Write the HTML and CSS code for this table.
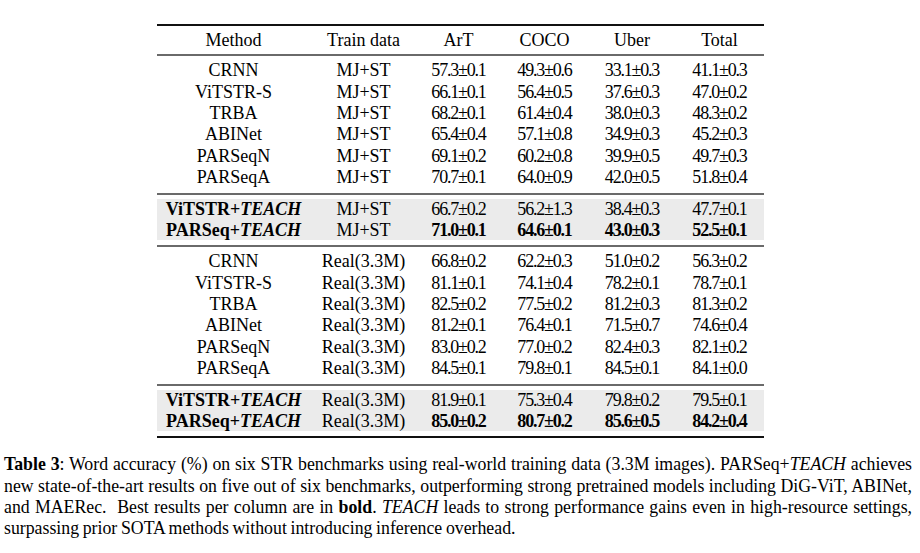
FILE: index.html
```html
<!DOCTYPE html>
<html lang="en">
<head>
<meta charset="utf-8">
<title>Table 3</title>
<link rel="stylesheet" href="styles.css">
</head>
<body>
<div class="page">
  <div class="table">
    <div class="section head">
      <div class="row">
        <div>Method</div><div>Train data</div><div>ArT</div><div>COCO</div><div>Uber</div><div>Total</div>
      </div>
    </div>

    <div class="section">
      <div class="row"><div>CRNN</div><div>MJ+ST</div><div class="num">57.3±0.1</div><div class="num">49.3±0.6</div><div class="num">33.1±0.3</div><div class="num">41.1±0.3</div></div>
      <div class="row"><div>ViTSTR-S</div><div>MJ+ST</div><div class="num">66.1±0.1</div><div class="num">56.4±0.5</div><div class="num">37.6±0.3</div><div class="num">47.0±0.2</div></div>
      <div class="row"><div>TRBA</div><div>MJ+ST</div><div class="num">68.2±0.1</div><div class="num">61.4±0.4</div><div class="num">38.0±0.3</div><div class="num">48.3±0.2</div></div>
      <div class="row"><div>ABINet</div><div>MJ+ST</div><div class="num">65.4±0.4</div><div class="num">57.1±0.8</div><div class="num">34.9±0.3</div><div class="num">45.2±0.3</div></div>
      <div class="row"><div>PARSeqN</div><div>MJ+ST</div><div class="num">69.1±0.2</div><div class="num">60.2±0.8</div><div class="num">39.9±0.5</div><div class="num">49.7±0.3</div></div>
      <div class="row"><div>PARSeqA</div><div>MJ+ST</div><div class="num">70.7±0.1</div><div class="num">64.0±0.9</div><div class="num">42.0±0.5</div><div class="num">51.8±0.4</div></div>
    </div>

    <div class="section">
      <div class="shade">
        <div class="row srow"><div><b>ViTSTR+<i>TEACH</i></b></div><div>MJ+ST</div><div class="num">66.7±0.2</div><div class="num">56.2±1.3</div><div class="num">38.4±0.3</div><div class="num">47.7±0.1</div></div>
        <div class="row srow"><div><b>PARSeq+<i>TEACH</i></b></div><div>MJ+ST</div><div class="num"><b>71.0±0.1</b></div><div class="num"><b>64.6±0.1</b></div><div class="num"><b>43.0±0.3</b></div><div class="num"><b>52.5±0.1</b></div></div>
      </div>
    </div>

    <div class="section">
      <div class="row"><div>CRNN</div><div>Real(3.3M)</div><div class="num">66.8±0.2</div><div class="num">62.2±0.3</div><div class="num">51.0±0.2</div><div class="num">56.3±0.2</div></div>
      <div class="row"><div>ViTSTR-S</div><div>Real(3.3M)</div><div class="num">81.1±0.1</div><div class="num">74.1±0.4</div><div class="num">78.2±0.1</div><div class="num">78.7±0.1</div></div>
      <div class="row"><div>TRBA</div><div>Real(3.3M)</div><div class="num">82.5±0.2</div><div class="num">77.5±0.2</div><div class="num">81.2±0.3</div><div class="num">81.3±0.2</div></div>
      <div class="row"><div>ABINet</div><div>Real(3.3M)</div><div class="num">81.2±0.1</div><div class="num">76.4±0.1</div><div class="num">71.5±0.7</div><div class="num">74.6±0.4</div></div>
      <div class="row"><div>PARSeqN</div><div>Real(3.3M)</div><div class="num">83.0±0.2</div><div class="num">77.0±0.2</div><div class="num">82.4±0.3</div><div class="num">82.1±0.2</div></div>
      <div class="row"><div>PARSeqA</div><div>Real(3.3M)</div><div class="num">84.5±0.1</div><div class="num">79.8±0.1</div><div class="num">84.5±0.1</div><div class="num">84.1±0.0</div></div>
    </div>

    <div class="section last">
      <div class="shade">
        <div class="row srow"><div><b>ViTSTR+<i>TEACH</i></b></div><div>Real(3.3M)</div><div class="num">81.9±0.1</div><div class="num">75.3±0.4</div><div class="num">79.8±0.2</div><div class="num">79.5±0.1</div></div>
        <div class="row srow"><div><b>PARSeq+<i>TEACH</i></b></div><div>Real(3.3M)</div><div class="num"><b>85.0±0.2</b></div><div class="num"><b>80.7±0.2</b></div><div class="num"><b>85.6±0.5</b></div><div class="num"><b>84.2±0.4</b></div></div>
      </div>
    </div>
  </div>

  <p class="caption">
    <span class="ln"><b>Table 3</b>: Word accuracy (%) on six STR benchmarks using real-world training data (3.3M images). PARSeq+<i>TEACH</i> achieves</span>
    <span class="ln">new state-of-the-art results on five out of six benchmarks, outperforming strong pretrained models including DiG-ViT, ABINet,</span>
    <span class="ln">and MAERec.&nbsp; Best results per column are in <b>bold</b>. <i>TEACH</i> leads to strong performance gains even in high-resource settings,</span>
    <span class="ln end">surpassing prior SOTA methods without introducing inference overhead.</span>
  </p>
</div>
</body>
</html>
```

FILE: styles.css
```css
html, body {
  margin: 0;
  padding: 0;
  background: #ffffff;
}

body {
  font-family: "Liberation Serif", "Times New Roman", serif;
  font-size: 18px;
  color: #000000;
}

.page {
  width: 920px;
  padding-top: 24px;
}

.table {
  width: 607px;
  margin: 0 auto;
  border-top: 2px solid #111111;
  border-bottom: 2px solid #111111;
}

.section {
  padding: 4px 0 5px;
  border-top: 2px solid #6a6a6a;
}

.section.head {
  border-top: none;
  padding: 3.5px 0 3.5px;
}

.row {
  display: grid;
  grid-template-columns: 154px 106px 84px 88px 87px 88px;
  height: 21.33px;
  line-height: 21.33px;
  text-align: center;
  white-space: nowrap;
}

.row.srow {
  height: 20.5px;
  line-height: 20.5px;
}

.shade {
  background: #ebebeb;
}

.num {
  letter-spacing: -1.2px;
}

.caption {
  width: 908px;
  margin: 16px 0 0 4px;
  line-height: 21.33px;
  font-size: 17.8px;
  word-spacing: -0.8px;
}

.ln {
  display: block;
  text-align: justify;
  text-align-last: justify;
  white-space: nowrap;
}

.ln.end {
  text-align-last: left;
}
```
